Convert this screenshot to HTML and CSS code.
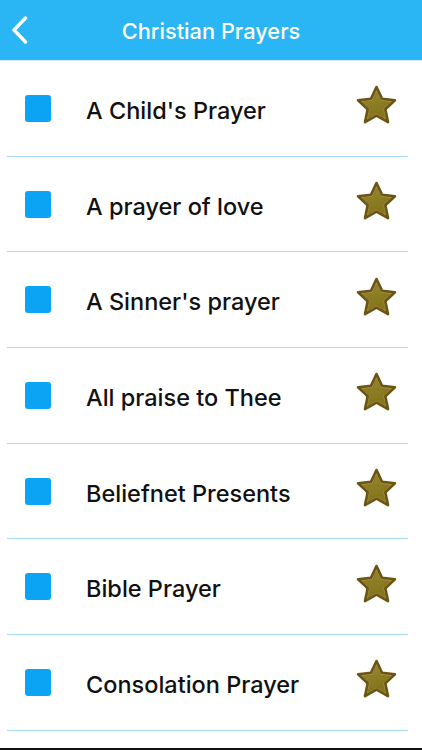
FILE: index.html
```html
<!DOCTYPE html>
<html>
<head>
<meta charset="utf-8">
<link rel="stylesheet" href="styles.css">
</head>
<body>
<div class="screen">
  <header class="nav">
    <svg class="back" width="17" height="28" viewBox="0 0 17 28"><path d="M14.5 2 L3 14 L14.5 26" fill="none" stroke="#fff" stroke-width="3.4" stroke-linecap="round" stroke-linejoin="round"/></svg>
    <h1 class="title">Christian Prayers</h1>
  </header>
  <ul class="list">
    <li class="row"><span class="check"></span><span class="label">A Child's Prayer</span><svg class="star" viewBox="0 0 40 40"><use href="#star"/></svg></li>
    <li class="row"><span class="check"></span><span class="label">A prayer of love</span><svg class="star" viewBox="0 0 40 40"><use href="#star"/></svg></li>
    <li class="row"><span class="check"></span><span class="label">A Sinner's prayer</span><svg class="star" viewBox="0 0 40 40"><use href="#star"/></svg></li>
    <li class="row"><span class="check"></span><span class="label">All praise to Thee</span><svg class="star" viewBox="0 0 40 40"><use href="#star"/></svg></li>
    <li class="row"><span class="check"></span><span class="label">Beliefnet Presents</span><svg class="star" viewBox="0 0 40 40"><use href="#star"/></svg></li>
    <li class="row"><span class="check"></span><span class="label">Bible Prayer</span><svg class="star" viewBox="0 0 40 40"><use href="#star"/></svg></li>
    <li class="row"><span class="check"></span><span class="label">Consolation Prayer</span><svg class="star" viewBox="0 0 40 40"><use href="#star"/></svg></li>
  </ul>
  <div class="bottom"></div>
</div>
<svg width="0" height="0" class="defs">
  <defs>
    <linearGradient id="sg" x1="0" y1="0" x2="0.3" y2="1">
      <stop offset="0" stop-color="#9c8e3c"/>
      <stop offset="0.5" stop-color="#8c7c22"/>
      <stop offset="1" stop-color="#85741c"/>
    </linearGradient>
    <symbol id="star" viewBox="0 0 40 40">
      <path d="M20 2 L25.4 13.4 L38 14.9 L28.6 23.6 L31.2 36.2 L20 29.9 L8.8 36.2 L11.4 23.6 L2 14.9 L14.6 13.4 Z" fill="#a3954e" stroke="#6a5512" stroke-width="2.6" stroke-linejoin="round"/>
      <path d="M20 7.5 L23.9 15.8 L33 16.9 L26.2 23.2 L28.1 32.3 L20 27.8 L11.9 32.3 L13.8 23.2 L7 16.9 L16.1 15.8 Z" fill="url(#sg)" stroke="#8a7a26" stroke-width="1" stroke-linejoin="round"/>
    </symbol>
  </defs>
</svg>
</body>
</html>
```
FILE: styles.css
```css
html, body {
  margin: 0;
  padding: 0;
  background: #fff;
}
.screen {
  width: 422px;
  height: 750px;
  display: flex;
  flex-direction: column;
  overflow: hidden;
  font-family: Inter, "Liberation Sans", Arial, sans-serif;
}
.nav {
  height: 60px;
  flex: none;
  background: #2ab5f4;
  border-bottom: 1px solid #d4ecf8;
  display: flex;
  align-items: center;
  justify-content: center;
  position: relative;
}
.back {
  position: absolute;
  left: 11px;
  top: 16px;
}
.title {
  margin: 0;
  color: #fff;
  font-size: 21.8px;
  font-weight: 500;
  padding-top: 1px;
}
.list {
  list-style: none;
  margin: 0;
  padding: 0;
  flex: 1;
}
.row {
  height: 94.7px;
  margin: 0 14px 0 7px;
  padding: 0 12px 0 18px;
  border-bottom: 1px solid #a6d9f2;
  display: flex;
  align-items: center;
}
.check {
  width: 26px;
  height: 27px;
  border-radius: 3px;
  background: #0ba4f4;
  flex: none;
}
.label {
  margin-left: 35px;
  font-size: 23.5px;
  font-weight: 500;
  color: #111;
  flex: 1;
  padding-top: 4px;
}
.star {
  width: 41px;
  height: 41px;
  flex: none;
  margin-top: -5px;
  margin-right: -1px;
}
.defs {
  position: absolute;
}
.bottom {
  height: 2px;
  background: #111;
  flex: none;
}
```
